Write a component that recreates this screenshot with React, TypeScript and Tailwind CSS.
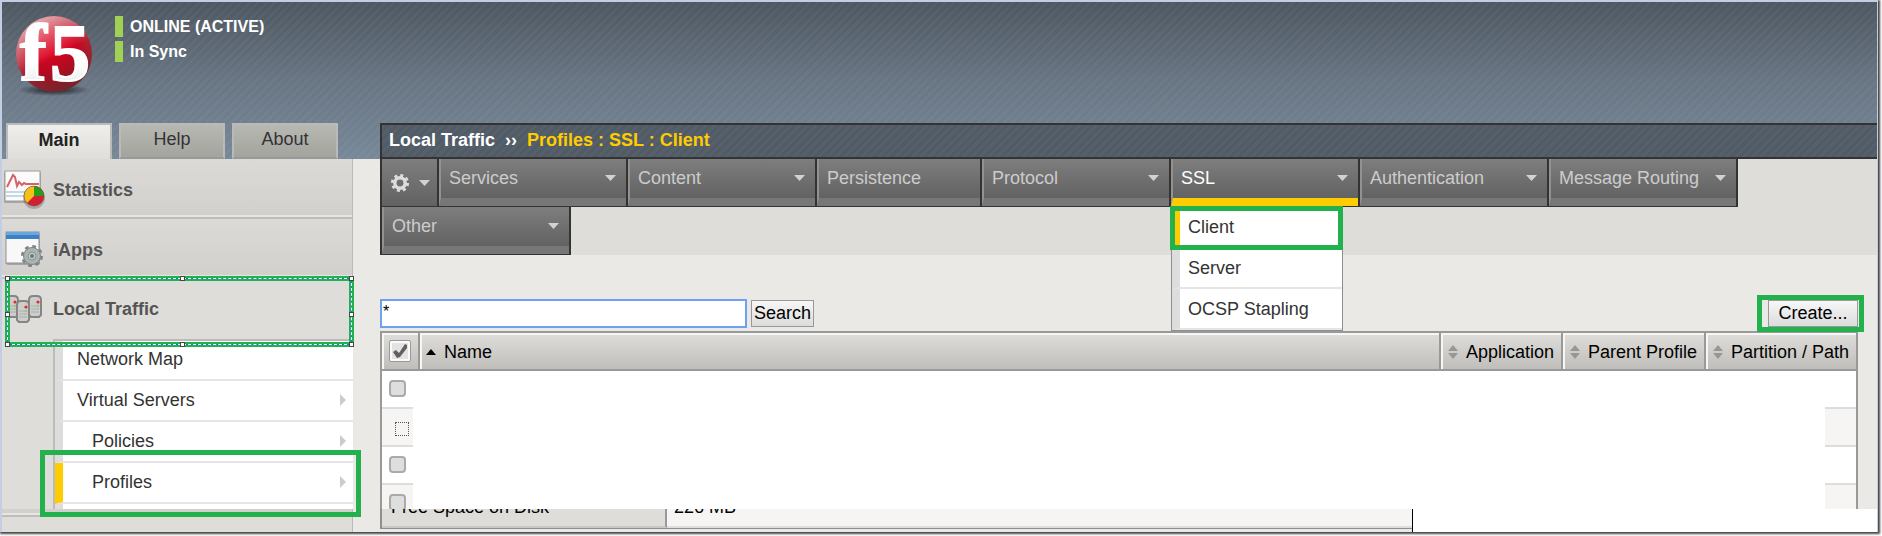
import React, { useState } from 'react';
import clsx from 'clsx';

const STRIPES = 'bg-[repeating-linear-gradient(135deg,rgba(255,255,255,0.03)_0px,rgba(255,255,255,0.03)_3px,transparent_3px,transparent_6px)]';

const menuTabs = [
  { label: 'Services', arrow: true },
  { label: 'Content', arrow: true },
  { label: 'Persistence', arrow: false },
  { label: 'Protocol', arrow: true },
  { label: 'SSL', arrow: true, items: ['Client', 'Server', 'OCSP Stapling'] },
  { label: 'Authentication', arrow: true },
  { label: 'Message Routing', arrow: true },
  { label: 'Other', arrow: true },
];

const subLinks = [
  { label: 'Network Map', arrow: false, nested: false },
  { label: 'Virtual Servers', arrow: true, nested: false },
  { label: 'Policies', arrow: true, nested: true },
  { label: 'Profiles', arrow: true, nested: true },
];

const columns = [
  { label: 'Application', width: 'w-[122px]' },
  { label: 'Parent Profile', width: 'w-[143px]' },
  { label: 'Partition / Path', width: 'w-[150px]' },
];

const Logo = () => (
  <svg width="80" height="84" viewBox="0 0 80 84" className="overflow-visible" role="img" aria-label="f5">
    <defs>
      <radialGradient id="ball" cx="0.5" cy="0.5" r="0.52">
        <stop offset="0" stopColor="#e2001f" />
        <stop offset="0.6" stopColor="#d4021f" />
        <stop offset="1" stopColor="#b02835" />
      </radialGradient>
      <linearGradient id="gloss" x1="0.2" y1="0" x2="0.5" y2="0.55">
        <stop offset="0" stopColor="#fff" stopOpacity="0.7" />
        <stop offset="1" stopColor="#fff" stopOpacity="0" />
      </linearGradient>
      <linearGradient id="shade" x1="0.4" y1="0.5" x2="0.6" y2="1">
        <stop offset="0" stopColor="#4a2828" stopOpacity="0" />
        <stop offset="1" stopColor="#4a2828" stopOpacity="0.65" />
      </linearGradient>
      <linearGradient id="letters" x1="0" y1="0" x2="0" y2="1">
        <stop offset="0.6" stopColor="#fff" />
        <stop offset="1" stopColor="#dfe2e2" />
      </linearGradient>
      <radialGradient id="ground">
        <stop offset="0" stopColor="#15191d" stopOpacity="0.95" />
        <stop offset="1" stopColor="#15191d" stopOpacity="0" />
      </radialGradient>
    </defs>
    <ellipse cx="40" cy="74" rx="36" ry="6" fill="url(#ground)" />
    <circle cx="40" cy="38" r="38" fill="url(#ball)" />
    <circle cx="40" cy="38" r="38" fill="url(#gloss)" />
    <circle cx="40" cy="38" r="38" fill="url(#shade)" />
    <g fontFamily="Liberation Serif, serif" fontWeight="700" fill="url(#letters)" stroke="#fff" strokeWidth="2">
      <text x="6" y="64" fontSize="80">f</text>
      <text x="36" y="64" fontSize="80">5</text>
    </g>
  </svg>
);

const StatisticsIcon = () => (
  <svg width="42" height="40" viewBox="0 0 42 40" aria-hidden="true">
    <rect x="1" y="2" width="37" height="31" rx="1" fill="#8a8a88" opacity="0.6" />
    <rect x="2" y="1" width="35" height="30" fill="#fbfbfb" stroke="#9b9b99" />
    <path d="M3 22h33M3 26h33" stroke="#c3d8ea" strokeWidth="2" />
    <path d="M4 17l3-6 3-6 2 2 2 9 2-4 3 3 2-2 2 1h13" fill="none" stroke="#d4646c" strokeWidth="2" />
    <circle cx="31" cy="28" r="11" fill="#555" opacity="0.35" />
    <circle cx="31" cy="26" r="10" fill="#d31f35" />
    <path d="M31 26V16a10 10 0 0 1 10 10z" fill="#2a9c1c" />
    <path d="M31 26V16a10 10 0 0 0-7 17z" fill="#f3c218" />
    <circle cx="31" cy="26" r="10" fill="none" stroke="#7c3a24" strokeOpacity="0.5" />
  </svg>
);

const IAppsIcon = () => (
  <svg width="42" height="40" viewBox="0 0 42 40" aria-hidden="true">
    <rect x="3" y="3" width="34" height="32" rx="2" fill="#777" opacity="0.5" />
    <rect x="3" y="2" width="33" height="31" fill="#f8f8f9" stroke="#8b8f94" />
    <rect x="3" y="2" width="33" height="7" fill="#3f82c4" />
    <rect x="3" y="2" width="33" height="3" fill="#6aa7e0" />
    <circle cx="29" cy="26" r="9" fill="none" stroke="#7d8585" strokeWidth="4" strokeDasharray="3.5 3.57" />
    <circle cx="29" cy="26" r="8.500" fill="#a9b4b2" stroke="#7d8585" />
    <circle cx="29" cy="26" r="4" fill="#c2c8c7" stroke="#8b9392" />
    <circle cx="29" cy="26" r="2" fill="#6f7777" />
  </svg>
);

const Server = ({ x, y }: { x: number; y: number }) => (
  <g transform={`translate(${x} ${y})`}>
    <path d="M1 5q0-4 4-4h4q4 0 4 4v15l-2 2H3l-2-2z" fill="#cdcdcc" stroke="#858585" strokeWidth="2" strokeLinejoin="round" />
    <path d="M3 11h8M3 14h8M3 17h8" stroke="#adadac" />
    <circle cx="10" cy="7" r="1.6" fill="#e02a36" />
    <circle cx="10" cy="11" r="1.2" fill="#8ed06a" />
  </g>
);

const LocalTrafficIcon = () => (
  <svg width="42" height="40" viewBox="0 0 42 40" aria-hidden="true">
    <Server x={2} y={6} />
    <Server x={25} y={6} />
    <Server x={13} y={11} />
  </svg>
);

const sections = [
  { label: 'Statistics', icon: <StatisticsIcon />, open: false },
  { label: 'iApps', icon: <IAppsIcon />, open: false },
  { label: 'Local Traffic', icon: <LocalTrafficIcon />, open: true },
];

const DownArrow = () => (
  <svg width="11" height="6" viewBox="0 0 11 6" aria-hidden="true">
    <path d="M0 0h11L5.500 6z" fill="#d2d2d2" />
  </svg>
);

const GearIcon = () => (
  <svg width="20" height="20" viewBox="0 0 20 20" aria-hidden="true">
    <circle cx="10" cy="10" r="7.600" fill="none" stroke="#dcdcdc" strokeWidth="3" strokeDasharray="3 2.970" />
    <circle cx="10" cy="10" r="5.200" fill="none" stroke="#dcdcdc" strokeWidth="3.500" />
  </svg>
);

const SortArrows = () => (
  <svg width="10" height="14" viewBox="0 0 10 14" className="shrink-0" aria-hidden="true">
    <path d="M5 0l5 6H0zM0 8h10l-5 6z" fill="#979797" />
  </svg>
);

// Rectangle drawn over the page to point something out
const Highlight = ({ className }: { className: string }) => (
  <div className={clsx('pointer-events-none absolute z-20 border-5 border-[#22b14c]', className)} />
);

const HANDLE = 'absolute size-[5px] border border-[#444] bg-white';

const SelectedHighlight = () => (
  <div className="pointer-events-none absolute -top-[3px] left-[3px] -right-[2px] z-20 h-[71px] border-5 border-[#22b14c]">
    <div className="absolute -inset-[3px] border border-[#0a78d6]" />
    <div className="absolute -inset-[3px] border border-dashed border-white" />
    <span className={clsx(HANDLE, '-top-[5px] -left-[5px]')} />
    <span className={clsx(HANDLE, '-top-[5px] left-1/2')} />
    <span className={clsx(HANDLE, '-top-[5px] -right-[5px]')} />
    <span className={clsx(HANDLE, 'top-1/2 -left-[5px]')} />
    <span className={clsx(HANDLE, 'top-1/2 -right-[5px]')} />
    <span className={clsx(HANDLE, '-bottom-[5px] -left-[5px]')} />
    <span className={clsx(HANDLE, '-bottom-[5px] left-1/2')} />
    <span className={clsx(HANDLE, '-right-[5px] -bottom-[5px]')} />
  </div>
);

const Header: React.FC = () => (
  <header className="bg-linear-to-b from-[#4d5761] via-[#687583] to-[#778898]">
    <div className={STRIPES}>
      <div className="flex h-[121px] items-start gap-[21px] pt-[14px] pl-3">
        <Logo />
        <ul className="space-y-1 text-[16px] font-bold leading-[21px] text-white">
          <li className="border-l-8 border-[#a0d155] pl-[7px]">ONLINE (ACTIVE)</li>
          <li className="border-l-8 border-[#a0d155] pl-[7px]">In Sync</li>
        </ul>
      </div>
      <div className="flex h-9">
        <div className="flex w-[351px] shrink-0 gap-[7px] pl-1">
          {['Main', 'Help', 'About'].map(tab => (
            <button
              key={tab}
              type="button"
              className={clsx(
                'w-[106px] border-2 border-[#bababa] pb-1',
                tab === 'Main'
                  ? 'border-b-0 bg-linear-to-b from-[#efeeec] to-[#deddd9] font-bold text-[#222]'
                  : 'border-b-[#999] bg-linear-to-b from-[#b8b8b3] to-[#a3a49e] text-[#333]'
              )}
            >
              {tab}
            </button>
          ))}
        </div>
        <h1 className="ml-[27px] flex-1 border-y-2 border-l-2 border-[#333] bg-[#505b66] font-bold text-white">
          <span className={clsx('flex h-full items-center gap-[10px] pb-[2px] pl-[7px]', STRIPES)}>
            <span>Local Traffic</span>
            <span>››</span>
            <span className="text-[#fc0]">Profiles : SSL : Client</span>
          </span>
        </h1>
      </div>
    </div>
  </header>
);

const Sidebar: React.FC = () => (
  <aside className="relative flex w-[351px] shrink-0 flex-col border-r border-[#bbb] bg-[#deddd9]">
    {sections.map(s => (
      <div key={s.label} className="relative">
        <a
          href="#"
          className={clsx(
            'flex h-[60px] items-center gap-2 pl-px font-bold text-[#555]',
            !s.open && 'border-b-2 border-[#bdbdbd] bg-linear-to-b from-[#dbdad6] to-[#d1d0cc] pt-1 shadow-[inset_0_-2px_0_#e6e5e2]'
          )}
        >
          {s.icon}
          {s.label}
        </a>
        {s.open && <SelectedHighlight />}
      </div>
    ))}
    <div className="relative ml-[51px]">
      <ul className="-mr-px h-[170px] overflow-hidden border-t-2 border-l-2 border-[#bbb] bg-white text-[#333]">
        {subLinks.map(l => (
          <li key={l.label} className="h-[41px] first:h-10">
            <a
              href="#"
              className={clsx(
                'flex h-full items-center justify-between border-b-2 border-l-8 border-b-[#e5e5e5] pr-[7px] pb-[2px]',
                l.label === 'Profiles' ? 'border-l-[#fc0]' : 'border-l-[#ddd]',
                l.nested ? 'pl-[29px]' : 'pl-[14px]'
              )}
            >
              {l.label}
              {l.arrow && (
                <svg width="6" height="12" viewBox="0 0 6 12" aria-hidden="true">
                  <path d="M0 0l6 6-6 6z" fill="#ccc" />
                </svg>
              )}
            </a>
          </li>
        ))}
        <li className="h-2 border-l-8 border-[#ddd]" />
      </ul>
      <Highlight className="-right-[9px] -bottom-2 -left-[13px] h-[67px]" />
    </div>
    <div className="h-2 border-b-2 border-[#bdbdbd] bg-[#d1d0cc] shadow-[inset_0_-2px_0_#e6e5e2]" />
  </aside>
);

const Menu: React.FC = () => (
  <nav className="flex flex-wrap border-l-2 border-[#333] bg-[#deddd9] text-[#ccc]">
    <button
      type="button"
      aria-label="Options"
      className="flex h-12 w-[57px] items-center gap-[9px] border-r-2 border-b border-[#333] bg-linear-to-b from-[#7e7e7e] to-[#626262] pl-2"
    >
      <GearIcon />
      <DownArrow />
    </button>
    {menuTabs.map(tab => (
      <div key={tab.label} className={clsx('relative h-12 border-r-2 border-b border-[#333]', tab.arrow ? 'w-[189px]' : 'w-[165px]')}>
        <button
          type="button"
          className={clsx(
            'flex h-[47px] w-full items-center justify-between border-b-8 border-l-2 border-l-[#929292] bg-linear-to-b from-[#7e7e7e] to-[#626262] pr-[10px] pb-[2px] pl-2',
            tab.items ? 'border-b-[#fc0] text-white' : 'border-b-[#777]'
          )}
        >
          {tab.label}
          {tab.arrow && <DownArrow />}
        </button>
        {tab.items && (
          <div className="absolute top-12 left-0 z-10 w-[172px] border-x border-b border-[#8f8f8f] bg-white text-[#333]">
            {tab.items.map(item => (
              <a
                key={item}
                href="#"
                className={clsx(
                  'flex h-[41px] items-center border-b-2 border-l-8 border-b-[#e5e5e5] pl-2',
                  item === 'Client' ? 'border-l-[#fc0]' : 'border-l-[#ddd]'
                )}
              >
                {item}
              </a>
            ))}
            <Highlight className="-top-px -right-px -left-[2px] h-11" />
          </div>
        )}
      </div>
    ))}
  </nav>
);

const BUTTON = 'h-[27px] border border-[#999] bg-linear-to-b from-[#f7f7f7] to-[#dcdcdc] leading-[25px] text-black';
const HEAD = 'border-[#999] bg-linear-to-b from-[#dfdeda] to-[#bfbeba] p-0 text-left font-normal shadow-[inset_2px_2px_0_#f6f6f5]';

const ProfileTable: React.FC = () => {
  const [allChecked, setAllChecked] = useState(true);

  return (
    <div className="relative h-[178px] overflow-hidden">
      <table className="w-full table-fixed border-separate border-spacing-0 border-x-2 border-t-2 border-[#999] bg-white text-black">
        <thead>
          <tr className="h-[38px]">
            <th className={clsx(HEAD, 'w-[38px] border-r-2 border-b-2')}>
              <label className="relative ml-[7px] block size-[22px]">
                <input
                  type="checkbox"
                  aria-label="Select all"
                  checked={allChecked}
                  onChange={e => setAllChecked(e.target.checked)}
                  className="block size-[22px] appearance-none rounded-[2px] border border-[#999] bg-[#e3e3e3] shadow-[inset_0_0_0_2px_#fafafa]"
                />
                {allChecked && (
                  <svg className="pointer-events-none absolute top-1 left-1" width="14" height="14" viewBox="0 0 14 14" aria-hidden="true">
                    <path d="M0 8l3-2 3 3 6-9 2 1v3l-7 9-3 1z" fill="#606060" />
                  </svg>
                )}
              </label>
            </th>
            <th className={clsx(HEAD, 'border-r-2 border-b-2')}>
              <span className="flex items-center gap-2 pt-[2px] pl-[6px]">
                <svg width="10" height="6" viewBox="0 0 10 6" aria-hidden="true">
                  <path d="M5 0l5 6H0z" fill="#000" />
                </svg>
                Name
              </span>
            </th>
            {columns.map((c, i) => (
              <th key={c.label} className={clsx(HEAD, 'border-b-2', i < columns.length - 1 && 'border-r-2', c.width)}>
                <span className="flex items-center gap-2 pt-[2px] pl-[7px] whitespace-nowrap">
                  <SortArrows />
                  {c.label}
                </span>
              </th>
            ))}
          </tr>
        </thead>
        <tbody>
          {[0, 1, 2, 3].map(row => (
            <tr key={row} className="h-[38px] even:bg-[#f6f5f3]">
              <td className="border-b-2 border-[#ddd] p-0">
                <input
                  type="checkbox"
                  aria-label={`Select row ${row + 1}`}
                  className={clsx(
                    'block appearance-none',
                    row === 1
                      ? 'mt-1 ml-[13px] size-[14px] border border-dotted border-[#555]'
                      : 'mb-[2px] ml-[7px] size-[17px] rounded-[4px] border-2 border-[#aaa] bg-[#dedede]'
                  )}
                />
              </td>
              <td colSpan={4} className="border-b-2 border-[#ddd] p-0" />
            </tr>
          ))}
        </tbody>
      </table>
      {/* row contents are blanked out */}
      <div className="absolute top-10 right-[33px] bottom-0 left-[33px] bg-white" />
    </div>
  );
};

const Main: React.FC = () => (
  <main className="min-w-0 flex-1 bg-[#eae9e5] pl-[27px]">
    <Menu />
    <form className="mt-11 mr-[19px] mb-[3px] flex items-center gap-1" onSubmit={e => e.preventDefault()}>
      <input
        type="text"
        aria-label="Search profiles"
        defaultValue="*"
        className="h-[29px] w-[367px] border-2 border-[#6ea1f0] bg-white px-px pb-1 text-[16px] text-black outline-none"
      />
      <button type="submit" className={clsx(BUTTON, 'w-[63px]')}>Search</button>
      <div className="relative ml-auto">
        <button type="button" className={clsx(BUTTON, 'w-[90px]')}>Create...</button>
        <Highlight className="-inset-y-[5px] -right-[6px] -left-[11px]" />
      </div>
    </form>
    <div className="mr-[19px]">
      <ProfileTable />
    </div>
    <div className="flex h-[23px] bg-white">
      <div className="w-[69%] border-r border-black bg-[#eae9e5]">
        <dl className="flex h-5 overflow-hidden border-b border-l-2 border-[#8f8f8f] text-black">
          <dt className="w-[285px] border-r-2 border-b-2 border-r-[#999] border-b-[#c8c7c4] bg-[#deddd9] pl-[9px]">
            <span className="-mt-[14px] block leading-6">Free Space on Disk</span>
          </dt>
          <dd className="flex-1 border-b-2 border-[#ddd] bg-[#f6f5f3] pl-[7px]">
            <span className="-mt-[14px] block leading-6">226 MB</span>
          </dd>
        </dl>
      </div>
    </div>
  </main>
);

const App: React.FC = () => (
  <div className="bg-white pr-1 pb-1 font-['Liberation_Sans',Arial,sans-serif] text-[18px] leading-6">
    <div className="border-t-2 border-r border-l-2 border-[#c3cee2] shadow-[1px_1px_2px_1px_#444]">
      <Header />
      <div className="flex">
        <Sidebar />
        <Main />
      </div>
    </div>
  </div>
);

export default App;
